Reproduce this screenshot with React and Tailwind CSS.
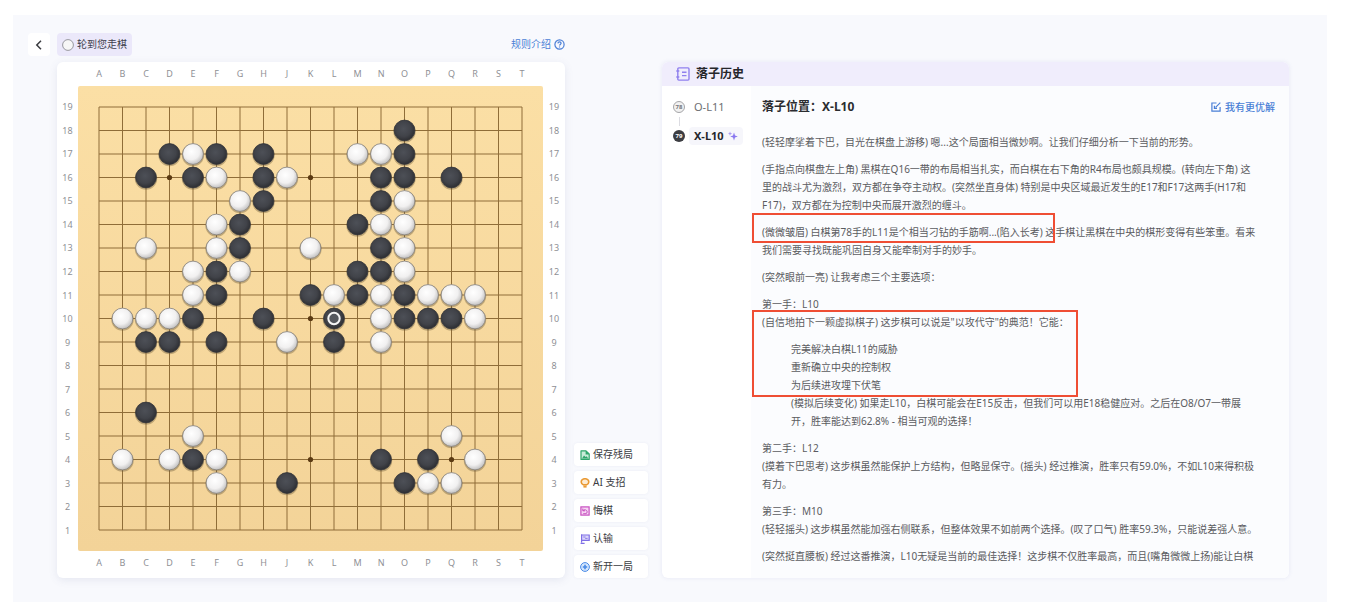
import { useState } from 'react'

const COLS = ['A', 'B', 'C', 'D', 'E', 'F', 'G', 'H', 'J', 'K', 'L', 'M', 'N', 'O', 'P', 'Q', 'R', 'S', 'T'];
const ROWS = Array.from({ length: 19 }, (_, i) => 19 - i);

// Stones by row: b = black, w = white
const STONES = {
    18: { b: 'O', w: '' },
    17: { b: 'DFHO', w: 'EMN' },
    16: { b: 'CEHNOQ', w: 'FJ' },
    15: { b: 'HN', w: 'GO' },
    14: { b: 'GM', w: 'FNO' },
    13: { b: 'GN', w: 'CFKO' },
    12: { b: 'FMN', w: 'EGO' },
    11: { b: 'FKMO', w: 'ELNPQR' },
    10: { b: 'EHLOPQ', w: 'BCDNR' },
    9: { b: 'CDFL', w: 'JN' },
    6: { b: 'C', w: '' },
    5: { b: '', w: 'EQ' },
    4: { b: 'ENP', w: 'BDFR' },
    3: { b: 'JO', w: 'FPQ' },
};

const pos = (i) => 21 + i * 23.5;
const colX = (c) => pos(COLS.indexOf(c));
const rowY = (r) => pos(19 - r);

function Stone({ col, row, color }) {
    return (
        <g>
            <circle cx={colX(col)} cy={rowY(row) + 1} r="11.2" fill="#6b5a3a" opacity="0.4" />
            <circle
                cx={colX(col)}
                cy={rowY(row)}
                r="10.4"
                fill={color === 'b' ? 'url(#black)' : 'url(#white)'}
                stroke={color === 'b' ? '#33353a' : '#85827d'}
                strokeWidth="0.8"
            />
        </g>
    );
}

function Goban() {
    return (
        <svg viewBox="0 0 465 465" className="block w-full" role="img" aria-label="19路棋盘">
            <defs>
                <linearGradient id="wood" x1="0" y1="0" x2="0" y2="1">
                    <stop offset="0" stopColor="#fbdfa5" />
                    <stop offset="1" stopColor="#f3d398" />
                </linearGradient>
                <radialGradient id="black" cx="0.45" cy="0.42" r="0.6">
                    <stop offset="0" stopColor="#4d5057" />
                    <stop offset="0.6" stopColor="#414349" />
                    <stop offset="1" stopColor="#2b2c30" />
                </radialGradient>
                <radialGradient id="white" cx="0.42" cy="0.38" r="0.65">
                    <stop offset="0" stopColor="#ffffff" />
                    <stop offset="0.6" stopColor="#f1f0f0" />
                    <stop offset="1" stopColor="#bdbcbc" />
                </radialGradient>
            </defs>
            <rect width="465" height="465" rx="2" fill="url(#wood)" />
            {ROWS.map((r, i) => (
                <g key={r} stroke="#8f6d38" strokeWidth="1">
                    <line x1={pos(0)} y1={pos(i)} x2={pos(18)} y2={pos(i)} />
                    <line x1={pos(i)} y1={pos(0)} x2={pos(i)} y2={pos(18)} />
                </g>
            ))}
            {[16, 10, 4].map((r) => ['D', 'K', 'Q'].map((c) => (
                <circle key={c + r} cx={colX(c)} cy={rowY(r)} r="2.6" fill="#5b3a12" />
            )))}
            {Object.entries(STONES).map(([row, { b, w }]) => (
                <g key={row}>
                    {[...b].map((c) => <Stone key={c} col={c} row={Number(row)} color="b" />)}
                    {[...w].map((c) => <Stone key={c} col={c} row={Number(row)} color="w" />)}
                </g>
            ))}
            {/* last move */}
            <circle cx={colX('L')} cy={rowY(10)} r="5.7" fill="#55585e" stroke="#f4f4f4" strokeWidth="2" />
        </svg>
    );
}

function ColLabels() {
    return (
        <div className="flex h-[22px] items-center px-[2%]">
            {COLS.map((c) => <span key={c} className="flex-1 text-center">{c}</span>)}
        </div>
    );
}

function RowLabels() {
    return (
        <div className="flex flex-col py-[9px]">
            {ROWS.map((r) => <span key={r} className="flex flex-1 items-center justify-center">{r}</span>)}
        </div>
    );
}

function SaveIcon() {
    return (
        <svg viewBox="0 0 10 10" className="size-2.5" fill="none">
            <path d="M1 .8h5L9.2 4v5.4H1z" fill="#c9ecd9" stroke="#2fa56c" strokeWidth="1.2" strokeLinejoin="round" />
            <path d="M5.6 .8V4.400h3.6z" fill="#2fa56c" />
            <path d="M2 8.400l2-3 1.700 1.700 1-.9 1.500 2.200z" fill="#2fa56c" />
        </svg>
    );
}

function BulbIcon() {
    return (
        <svg viewBox="0 0 10 10" className="size-2.5" fill="none" stroke="#ea9a35">
            <path d="M3.400 6.900C2 6.200 1.200 5.200 1.200 4a3.800 3.300 0 0 1 7.600 0c0 1.200-.8 2.200-2.200 2.900z" fill="#fdebd3" strokeWidth="1.600" strokeLinejoin="round" />
            <path d="M3.400 8.800h3.200" strokeWidth="1.600" />
        </svg>
    );
}

function UndoIcon() {
    return (
        <svg viewBox="0 0 10 10" className="size-2.5" fill="none" stroke="#c74fc0">
            <rect x=".9" y=".9" width="8.2" height="8.2" fill="#f6d5f3" strokeWidth="1.2" />
            <path d="M2.800 2.600v2.200h2.200M3 4.600c1.200-1.400 4-1 4.200 1.200 0 .9-.5 1.500-1.200 1.900H3.200" strokeWidth="1" />
        </svg>
    );
}

function FlagIcon() {
    return (
        <svg viewBox="0 0 10 10" className="size-2.5" fill="none" stroke="#7f6fe6" strokeWidth="1.200">
            <path d="M1.600 .6v7.800M.6 9.300h4" />
            <path d="M1.600 1h7.600v5.400H1.600z" fill="#ddd8fa" />
            <path d="M3.200 3h2.400M5.200 4.400h2.400" strokeWidth=".9" />
        </svg>
    );
}

function NewIcon() {
    return (
        <svg viewBox="0 0 10 10" className="size-2.5" fill="none" stroke="#4a8be6">
            <circle cx="5" cy="5" r="4.400" strokeWidth="1" fill="#d3e5fc" />
            <path d="M5 2.800v4.400M2.800 5h4.400" strokeWidth="1.600" />
        </svg>
    );
}

const ACTIONS = [
    { label: '保存残局', Icon: SaveIcon },
    { label: 'AI 支招', Icon: BulbIcon },
    { label: '悔棋', Icon: UndoIcon },
    { label: '认输', Icon: FlagIcon },
    { label: '新开一局', Icon: NewIcon },
];

const MOVES = [
    { n: 78, label: 'O-L11' },
    { n: 79, label: 'X-L10' },
];

function History() {
    const [selected, setSelected] = useState(79);

    return (
        <section className="mt-[29px] ml-3.5 flex min-w-0 flex-[627_1_0%] flex-col rounded-md bg-white shadow-[0_0_4px_rgba(120,130,190,0.14)]">
            <h2 className="flex h-6 items-center gap-1.5 rounded-t-md bg-[#f0edfc] pl-3.5 text-xs font-bold text-[#25262b]">
                <svg viewBox="0 0 14 14" className="size-3.5" fill="none" stroke="#9080ee" strokeWidth="1.400">
                    <rect x="1.800" y=".9" width="11.200" height="12.200" rx="1" />
                    <path d="M.3 4h3M.3 10h3M6 5.200h4.500M6 8.600h4.500" />
                </svg>
                落子历史
            </h2>
            <div className="flex flex-1">
                <ol className="w-[89px] shrink-0 pt-3 pl-[11px] text-[11px]">
                    {MOVES.map(({ n, label }, i) => (
                        <li key={n}>
                            {i > 0 && <div className="my-px ml-[6px] h-[9px] w-px bg-[#dcdce2]"></div>}
                            <button className="flex h-[18px] items-center gap-1" onClick={() => setSelected(n)}>
                                <span className={selected === n
                                    ? 'flex size-3 items-center justify-center rounded-full bg-[#3c3d42] text-[6px] font-bold text-white'
                                    : 'flex size-3 items-center justify-center rounded-full border border-[#a5a5a8] bg-[#f1f1f1] text-[6px] font-bold text-[#77777b]'}>
                                    {n}
                                </span>
                                <span className={selected === n
                                    ? 'flex h-[18px] items-center gap-1 rounded-sm bg-[#f6f6fb] px-[5px] font-bold text-[#25262b]'
                                    : 'px-[5px] text-[#6d6e72]'}>
                                    {label}
                                    {selected === n && (
                                        <svg viewBox="0 0 10 10" className="size-2.5" fill="#8a78f0">
                                            <path d="M6 1.500l1 3 2.800 1-2.800 1-1 3-1-3-2.800-1 2.800-1z" />
                                            <path d="M2 .6l.6 1.500 1.500.6-1.500.6L2 4.800l-.6-1.500L0 2.700l1.400-.6z" opacity=".7" />
                                        </svg>
                                    )}
                                </span>
                            </button>
                        </li>
                    ))}
                </ol>
                <article className="min-w-0 flex-1 rounded-br-md bg-[#fbfcfe] pr-3.5 pl-[11px]">
                    <div className="flex h-[42px] items-center justify-between">
                        <h3 className="text-xs font-bold text-[#2b2c30]">落子位置：X-L10</h3>
                        <button className="flex items-center gap-1 text-[10px] font-medium text-[#4a7fd6]">
                            <svg viewBox="0 0 10 10" className="size-2.5" fill="none" stroke="currentColor" strokeWidth="1.200">
                                <path d="M5.500 1H.9v8.200h8.200V5" />
                                <path d="M9.300.7L4.600 5.400M3.400 3.800v2.600h2.600" />
                            </svg>
                            我有更优解
                        </button>
                    </div>
                    <div className="mt-[5px] flex flex-col gap-[9px] text-[10px] leading-[18px] whitespace-nowrap text-[#5a5b60]">
                        <p>(轻轻摩挲着下巴，目光在棋盘上游移) 嗯...这个局面相当微妙啊。让我们仔细分析一下当前的形势。</p>
                        <p>
                            (手指点向棋盘左上角) 黑棋在Q16一带的布局相当扎实，而白棋在右下角的R4布局也颇具规模。(转向左下角) 这<br />
                            里的战斗尤为激烈，双方都在争夺主动权。(突然坐直身体) 特别是中央区域最近发生的E17和F17这两手(H17和<br />
                            F17)，双方都在为控制中央而展开激烈的缠斗。
                        </p>
                        <div className="relative">
                            <div className="absolute -top-2.5 -left-2.5 h-[30px] w-[303px] border-2 border-[#ef4e34]"></div>
                            <p>
                                (微微皱眉) 白棋第78手的L11是个相当刁钻的手筋啊...(陷入长考) 这手棋让黑棋在中央的棋形变得有些笨重。看来<br />
                                我们需要寻找既能巩固自身又能牵制对手的妙手。
                            </p>
                        </div>
                        <p>(突然眼前一亮) 让我考虑三个主要选项：</p>
                        <div className="relative flex flex-col gap-[9px]">
                            <div className="absolute top-[15px] -left-2.5 h-[87px] w-[326px] border-2 border-[#ef4e34]"></div>
                            <p>
                                第一手：L10<br />
                                (自信地拍下一颗虚拟棋子) 这步棋可以说是"以攻代守"的典范！它能：
                            </p>
                            <ul className="pl-[29px]">
                                <li>完美解决白棋L11的威胁</li>
                                <li>重新确立中央的控制权</li>
                                <li>为后续进攻埋下伏笔</li>
                                <li>
                                    (模拟后续变化) 如果走L10，白棋可能会在E15反击，但我们可以用E18稳健应对。之后在O8/O7一带展<br />
                                    开，胜率能达到62.8% - 相当可观的选择！
                                </li>
                            </ul>
                        </div>
                        <p>
                            第二手：L12<br />
                            (摸着下巴思考) 这步棋虽然能保护上方结构，但略显保守。(摇头) 经过推演，胜率只有59.0%，不如L10来得积极<br />
                            有力。
                        </p>
                        <p>
                            第三手：M10<br />
                            (轻轻摇头) 这步棋虽然能加强右侧联系，但整体效果不如前两个选择。(叹了口气) 胜率59.3%，只能说差强人意。
                        </p>
                        <p>(突然挺直腰板) 经过这番推演，L10无疑是当前的最佳选择！这步棋不仅胜率最高，而且(嘴角微微上扬)能让白棋</p>
                    </div>
                </article>
            </div>
        </section>
    );
}

export default function App() {
    return (
        <div className="bg-white pt-[15px] pr-8 pb-3 pl-[13px] font-['Noto_Sans','Noto_Sans_CJK_SC',sans-serif]">
            <main className="flex bg-[#f8f9fd] pt-[18px] pr-[38px] pb-6 pl-[15px]">
                <div className="min-w-0 flex-[537_1_0%]">
                    <header className="flex h-[23px] items-center text-[10px]">
                        <button aria-label="返回" className="flex h-full w-[22px] items-center justify-center rounded-sm bg-white">
                            <svg viewBox="0 0 10 10" className="size-2.5" fill="none" stroke="#3a3b40" strokeWidth="1.500">
                                <path d="M7 .8L2.800 5 7 9.200" />
                            </svg>
                        </button>
                        <div className="ml-[7px] flex h-full items-center gap-[3px] rounded-sm bg-[#ebe8fa] px-[5px] text-[#3f3f4d]">
                            <svg viewBox="0 0 12 12" className="size-3">
                                <circle cx="6" cy="6" r="5.400" fill="#f7f7f7" stroke="#8d8d94" strokeWidth=".9" />
                            </svg>
                            轮到您走棋
                        </div>
                        <a href="#rules" className="ml-auto flex items-center gap-[3px] text-[#4a7fd6]">
                            规则介绍
                            <svg viewBox="0 0 11 11" className="size-[11px]" fill="none" stroke="currentColor" strokeWidth="1.200">
                                <circle cx="5.500" cy="5.500" r="4.600" />
                                <path d="M3.900 4.400c.1-2 3.200-1.900 3.200-.1 0 1.100-1.600 1.100-1.600 2.300M5.500 7.400v1" />
                            </svg>
                        </a>
                    </header>
                    <div className="mt-1.5 ml-[29px] grid grid-cols-[21px_1fr_22px] grid-rows-[24px_auto_27px] rounded-md bg-white text-[9px] leading-none text-[#8f9095] shadow-[0_2px_8px_rgba(90,100,150,0.12)]">
                        <div></div>
                        <ColLabels />
                        <div></div>
                        <RowLabels />
                        <Goban />
                        <RowLabels />
                        <div></div>
                        <ColLabels />
                    </div>
                </div>
                <div className="ml-[9px] flex w-[74px] shrink-0 flex-col gap-[5px] self-end">
                    {ACTIONS.map(({ label, Icon }) => (
                        <button key={label} className="flex h-[23px] items-center gap-[3px] rounded-sm bg-white pl-1.5 text-[10px] text-[#3b3c42] shadow-[0_0_3px_rgba(90,100,150,0.08)]">
                            <Icon />
                            {label}
                        </button>
                    ))}
                </div>
                <History />
            </main>
        </div>
    );
}
